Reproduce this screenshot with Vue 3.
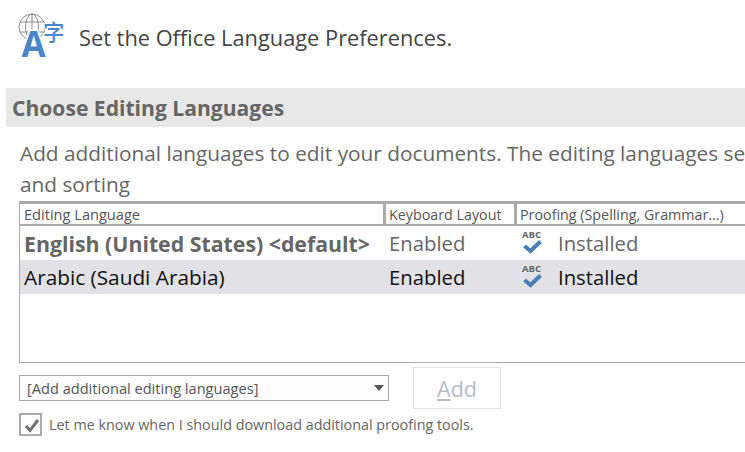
<script setup>
const rows = [
  { lang: 'English (United States) <default>', kb: 'Enabled', proof: 'Installed', isDefault: true },
  { lang: 'Arabic (Saudi Arabia)', kb: 'Enabled', proof: 'Installed', isDefault: false },
]
</script>

<template>
  <div class="page">
    <header class="head">
      <svg class="logo" width="60" height="60" viewBox="0 0 60 60">
        <g fill="none" stroke="#8c8c8c" stroke-width="1">
          <circle cx="25" cy="18" r="13" />
          <ellipse cx="25" cy="18" rx="6.500" ry="13" />
          <path d="M25 5V31M13 13H37M13 23H37" />
        </g>
        <text x="26.500" y="48" class="logo-a">A</text>
        <text x="36" y="31" class="logo-zi">字</text>
      </svg>
      <h1 class="title">Set the Office Language Preferences.</h1>
    </header>

    <h2 class="band">Choose Editing Languages</h2>

    <p class="intro">Add additional languages to edit your documents. The editing languages set language-specific features, including dictionaries, grammar checking,<br />and sorting</p>

    <section class="table">
      <div class="thead">
        <div class="th c1">Editing Language</div>
        <div class="th c2">Keyboard Layout</div>
        <div class="th c3">Proofing (Spelling, Grammar...)</div>
      </div>
      <div v-for="r in rows" :key="r.lang" class="row" :class="{ alt: !r.isDefault }">
        <div class="td c1" :class="{ strong: r.isDefault }">{{ r.lang }}</div>
        <div class="td c2">{{ r.kb }}</div>
        <div class="td c3">
          <svg class="abc" width="24" height="28" viewBox="0 0 24 28">
            <text x="1" y="9" class="abc-t">ABC</text>
            <path d="M3.500 17L9.500 22L19.500 12.500" fill="none" stroke="#4a7fb8" stroke-width="4" />
          </svg>
          <span>{{ r.proof }}</span>
        </div>
      </div>
    </section>

    <div class="controls">
      <div class="select">
        <span>[Add additional editing languages]</span>
        <i class="caret"></i>
      </div>
      <button class="add" type="button" disabled><u>A</u>dd</button>
    </div>

    <label class="check">
      <span class="box">
        <svg width="18" height="18" viewBox="0 0 18 18">
          <path d="M4 10L8 14.500L16 4" fill="none" stroke="#707070" stroke-width="3" />
        </svg>
      </span>
      <span>Let me know when I should download additional proofing tools.</span>
    </label>
  </div>
</template>

<style>
html, body { margin: 0; overflow: hidden; background: #fff; }
</style>

<style scoped>
.page {
  width: 745px;
  height: 452px;
  overflow: hidden;
  background: #fff;
  font-family: "Open Sans", "Noto Sans", sans-serif;
  color: #666;
  box-sizing: border-box;
  padding-top: 9px;
}
.head { display: flex; align-items: flex-start; height: 60px; padding-left: 7px; }
.logo { flex: none; }
.logo-a { font: 700 35px "Open Sans", sans-serif; fill: #4a86c8; text-anchor: middle; stroke: #fff; stroke-width: 3px; paint-order: stroke; }
.logo-zi { font: 500 21.500px "Noto Sans CJK SC", sans-serif; fill: #4a86c8; stroke: #fff; stroke-width: 2px; paint-order: stroke; }
.title { margin: 14px 0 0 12px; font-size: 21.800px; line-height: 30px; font-weight: 400; color: #444; white-space: nowrap; }
.band {
  margin: 19px 0 0 6px;
  height: 39px;
  line-height: 39px;
  padding-left: 6px;
  background: #e8e8e8;
  font-size: 21.100px;
  font-weight: 700;
  color: #666;
  white-space: nowrap;
}
.intro {
  margin: 11px 0 0 20px;
  width: 1600px;
  font-size: 20.800px;
  line-height: 31px;
  color: #666;
}
.table {
  margin: 1px 0 0 19px;
  width: 900px;
  height: 162px;
  box-sizing: border-box;
  border: 1px solid #aaa;
  border-top-width: 3px;
}
.thead { display: flex; height: 20px; border-bottom: 2px solid #aaa; }
.th { font-size: 14.300px; line-height: 21px; color: #555; padding-left: 3px; box-sizing: border-box; border-right: 3px solid #aaa; white-space: nowrap; }
.th.c1 { font-size: 14.600px; padding-left: 4px; }
.th.c3 { border-right: 0; }
.c1 { width: 366px; flex: none; }
.c2 { width: 131px; flex: none; }
.c3 { flex: 1; }
.row { display: flex; height: 34px; align-items: center; }
.row.alt { background: #e1e1e6; }
.row.alt .td { color: #111; }
.td { font-size: 20.300px; white-space: nowrap; color: #666; padding-left: 3px; box-sizing: border-box; }
.td.c1 { font-size: 20.800px; padding-left: 4px; }
.td.c1.strong { font-size: 21.300px; font-weight: 700; }
.td.c3 { display: flex; align-items: center; padding-left: 4px; }
.abc { flex: none; margin-right: 13px; }
.abc-t { font: 700 9.500px "Open Sans", sans-serif; fill: #666; }
.controls { display: flex; align-items: flex-start; margin: 4px 0 0 19px; }
.select {
  margin-top: 8px;
  width: 370px;
  height: 26px;
  box-sizing: border-box;
  border: 1px solid #aaa;
  background: #fdfdfd;
  display: flex;
  align-items: center;
  justify-content: space-between;
  padding: 0 4px 0 7px;
  font-size: 14.600px;
  color: #555;
}
.caret { width: 0; height: 0; border-left: 5px solid transparent; border-right: 5px solid transparent; border-top: 6px solid #555; }
.add {
  margin-left: 24px;
  width: 88px;
  height: 42px;
  box-sizing: border-box;
  border: 1px solid #e3e3e3;
  background: #fff;
  font: 400 21.500px "Open Sans", sans-serif;
  color: #b4bcc6;
  padding: 0;
}
.check { display: flex; align-items: center; margin: 4px 0 0 19px; font-size: 14.350px; color: #666; white-space: nowrap; }
.box { width: 23px; height: 23px; box-sizing: border-box; border: 2px solid #aaa; display: flex; align-items: center; justify-content: center; margin-right: 7px; }
</style>
